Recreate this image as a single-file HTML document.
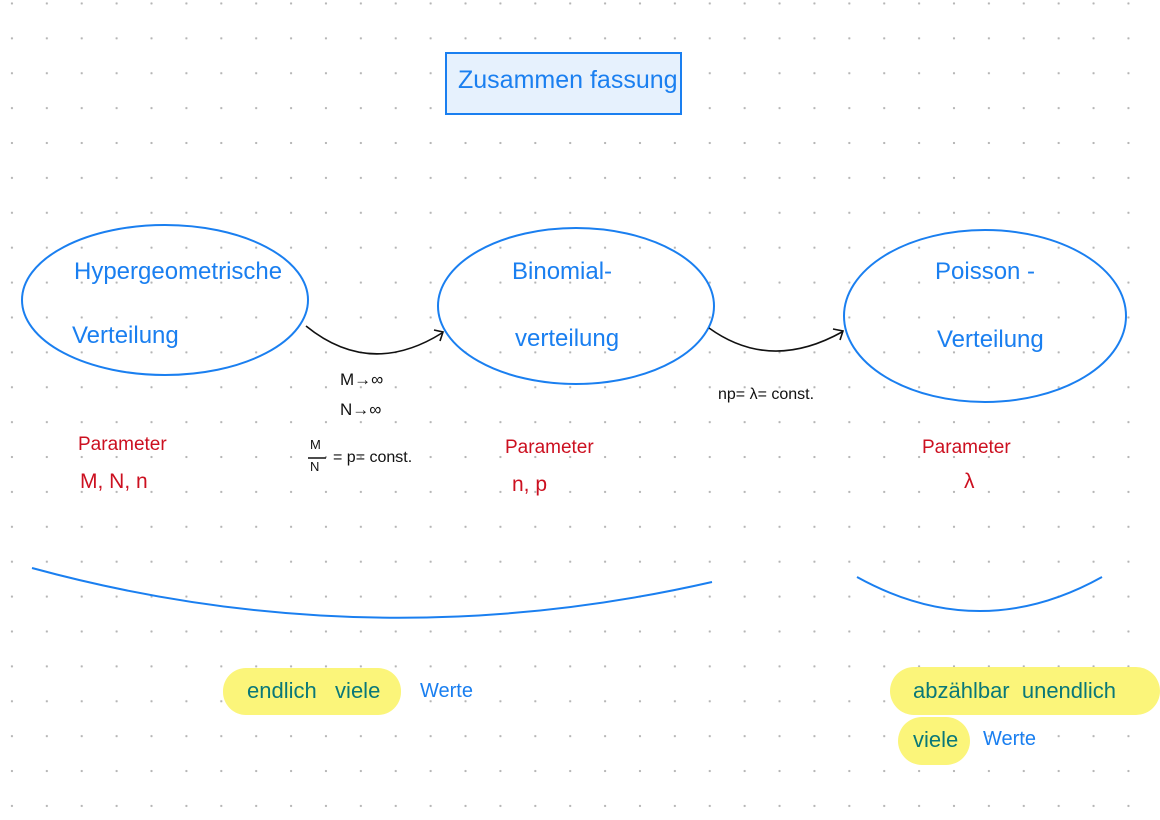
<!DOCTYPE html><html><head><meta charset="utf-8"><style>
body{margin:0;width:1160px;height:820px;overflow:hidden;background:#fff;
background-image:radial-gradient(circle,#b5b5b5 1px,transparent 1.3px);background-size:34.9px 34.9px;background-position:-5.5px -14px;font-family:"Liberation Sans",sans-serif}
.t{position:absolute;white-space:nowrap}
.b{color:#1a7ff0}.r{color:#cc1020}.k{color:#111}.g{color:#0a7878}
</style></head><body>
<svg width="1160" height="820" style="position:absolute;left:0;top:0">
<rect x="446" y="53" width="235" height="61" fill="#e6f1fd" stroke="#1a7ff0" stroke-width="2"/>
<g fill="none" stroke="#1a7ff0" stroke-width="2">
<ellipse cx="165" cy="300" rx="143" ry="75"/>
<ellipse cx="576" cy="306" rx="138" ry="78"/>
<ellipse cx="985" cy="316" rx="141" ry="86"/>
<path d="M32 568 Q370 660 712 582"/>
<path d="M857 577 Q980 645 1102 577"/>
</g>
<g fill="none" stroke="#111" stroke-width="1.6">
<path d="M306 326 Q370 378 442 333"/><path d="M434 330 L443 332 L440 341"/>
<path d="M709 328 Q770 372 842 332"/><path d="M833 329 L843 331 L840 340"/>
<path d="M308 458 H326"/>
</g>
<rect x="223" y="668" width="178" height="47" rx="23" fill="#fbf57a"/>
<rect x="890" y="667" width="270" height="48" rx="24" fill="#fbf57a"/>
<rect x="898" y="717" width="72" height="48" rx="24" fill="#fbf57a"/>
</svg>
<div class="t b" style="left:458px;top:66px;font-size:25px">Zusammen fassung</div>
<div class="t b" style="left:74px;top:258px;font-size:24px">Hypergeometrische</div>
<div class="t b" style="left:72px;top:322px;font-size:24px">Verteilung</div>
<div class="t b" style="left:512px;top:258px;font-size:24px">Binomial-</div>
<div class="t b" style="left:515px;top:325px;font-size:24px">verteilung</div>
<div class="t b" style="left:935px;top:258px;font-size:24px">Poisson -</div>
<div class="t b" style="left:937px;top:326px;font-size:24px">Verteilung</div>
<div class="t k" style="left:340px;top:370px;font-size:17px">M→∞</div>
<div class="t k" style="left:340px;top:400px;font-size:17px">N→∞</div>
<div class="t k" style="left:310px;top:437px;font-size:13px">M</div>
<div class="t k" style="left:310px;top:459px;font-size:13px">N</div>
<div class="t k" style="left:333px;top:449px;font-size:16px">= p= const.</div>
<div class="t k" style="left:718px;top:386px;font-size:16px">np= λ= const.</div>
<div class="t r" style="left:78px;top:434px;font-size:19px">Parameter</div>
<div class="t r" style="left:80px;top:470px;font-size:21px">M, N, n</div>
<div class="t r" style="left:505px;top:437px;font-size:19px">Parameter</div>
<div class="t r" style="left:512px;top:473px;font-size:21px">n, p</div>
<div class="t r" style="left:922px;top:437px;font-size:19px">Parameter</div>
<div class="t r" style="left:964px;top:470px;font-size:21px">λ</div>
<div class="t g" style="left:247px;top:678px;font-size:22px">endlich&nbsp;&nbsp; viele</div>
<div class="t b" style="left:420px;top:680px;font-size:20px">Werte</div>
<div class="t g" style="left:913px;top:678px;font-size:22px">abzählbar&nbsp; unendlich</div>
<div class="t g" style="left:913px;top:727px;font-size:22px">viele</div>
<div class="t b" style="left:983px;top:728px;font-size:20px">Werte</div>
</body></html>
